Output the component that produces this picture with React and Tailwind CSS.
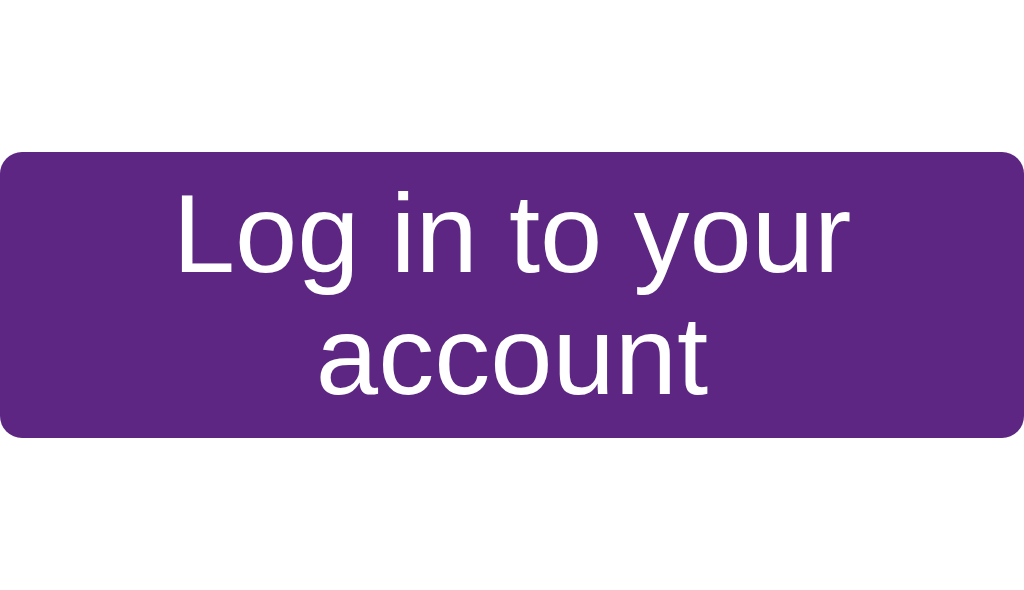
import React from 'react';

const App = () => {
  return (
    <div className="w-[1024px] h-[590px] bg-white flex items-center justify-center">
      <button
        className="w-full h-[286px] bg-[#5c2682] rounded-[22px] text-white text-[112px] leading-[122px] text-center px-8"
        style={{ fontFamily: '"Liberation Sans", Arial, sans-serif' }}
      >
        Log in to your
        <br />
        account
      </button>
    </div>
  );
};

export default App;
